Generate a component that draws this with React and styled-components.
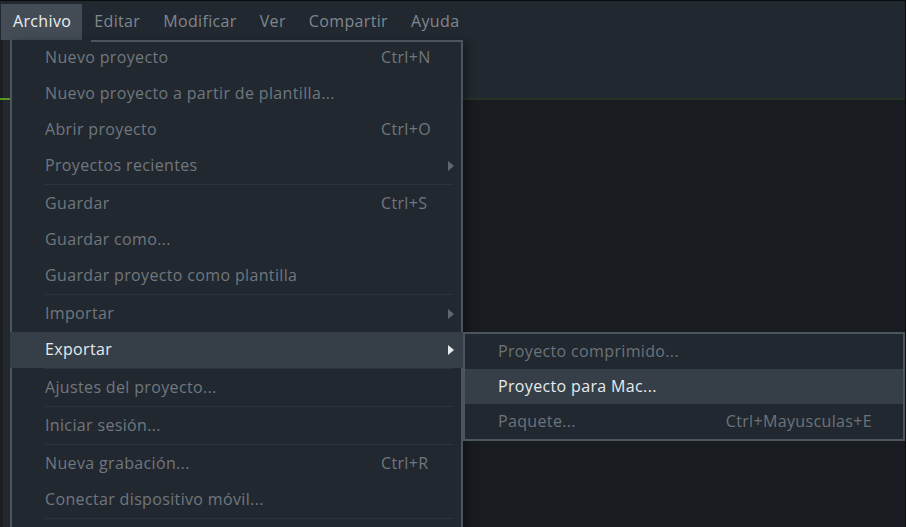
import styled, { createGlobalStyle } from "styled-components";

const GlobalStyle = createGlobalStyle`
  html, body {
    margin: 0;
    padding: 0;
    height: 100%;
    overflow: hidden;
    background: #181b1f;
  }
  #root {
    height: 100%;
  }
`;

const Window = styled.div`
  position: relative;
  height: 100vh;
  display: flex;
  flex-direction: column;
  font-family: "Open Sans", Lato, sans-serif;
  font-size: 16px;
  letter-spacing: 0.35px;
  background: #181b1f;
  border-right: 1px solid #0c0d0f;
  box-sizing: border-box;
  overflow: hidden;
`;

const MenuBar = styled.div`
  display: flex;
  align-items: flex-end;
  height: 40px;
  box-sizing: border-box;
  padding: 3px 0 0 1px;
  border-top: 1px solid #0b0c0e;
  background: #222830;
`;

const MenuTitle = styled.div`
  display: flex;
  align-items: center;
  height: 36px;
  padding: 0 11px 2px 12px;
  box-sizing: border-box;
  color: ${(p) => (p.$open ? "#e9eef0" : "#80878d")};
  background: ${(p) => (p.$open ? "#434c54" : "transparent")};
`;

const Workspace = styled.div`
  flex: 1;
  display: flex;
`;

const SideRail = styled.div`
  width: 10px;
  display: flex;
  flex-direction: column;
  background: linear-gradient(90deg, #1a1d22 0 3px, #252a30 3px);
`;

const RailTop = styled.div`
  height: 58px;
`;

const RailMarker = styled.div`
  height: 2px;
  background: #5a9b1e;
`;

const Main = styled.div`
  flex: 1;
  display: flex;
  flex-direction: column;
`;

const TopPanel = styled.div`
  height: 58px;
  background: #222830;
  border-bottom: 2px solid #263226;
`;

const Canvas = styled.div`
  flex: 1;
  background: #181b1f;
`;

const Menu = styled.div`
  position: absolute;
  left: 10px;
  top: 40px;
  width: 453px;
  box-sizing: border-box;
  padding-bottom: 24px;
  background: #222830;
  border: 2px solid #4b555d;
  border-top: none;
  box-shadow: 4px 2px 8px rgba(0, 0, 0, 0.35);
  z-index: 2;

  &::before {
    content: "";
    position: absolute;
    top: 0;
    left: 79px;
    right: -2px;
    height: 2px;
    background: #4b555d;
  }
`;

const Item = styled.div`
  position: relative;
  display: grid;
  grid-template-columns: 1fr 62px 18px;
  align-items: center;
  height: 36px;
  box-sizing: border-box;
  margin: ${(p) => (p.$active ? "0 -2px" : "0")};
  padding: ${(p) => (p.$active ? "0 2px 2px 35px" : "0 0 2px 33px")};
  color: ${(p) => (p.$active ? "#e6ebee" : "#70777e")};
  background: ${(p) => (p.$active ? "#363f48" : "transparent")};
  white-space: nowrap;
`;

const Label = styled.span``;

const Shortcut = styled.span``;

const Arrow = styled.span`
  width: 0;
  height: 0;
  margin: 2px 0 0 5px;
  border-top: 5.5px solid transparent;
  border-bottom: 5.5px solid transparent;
  border-left: 6px solid ${(p) => (p.$active ? "#e6ebee" : "#5f676e")};
`;

const Separator = styled.div`
  height: 1px;
  margin: 0 8px 1px 32px;
  background: #2d333b;
`;

const SubMenu = styled.div`
  position: absolute;
  left: 100%;
  top: 0;
  width: 442px;
  box-sizing: border-box;
  background: #222830;
  border: 2px solid #4b555d;
`;

const SubItem = styled.div`
  display: flex;
  align-items: center;
  justify-content: space-between;
  height: 35px;
  box-sizing: border-box;
  padding: 0 31px 2px 33px;
  color: ${(p) => (p.$active ? "#e6ebee" : "#6c737a")};
  background: ${(p) => (p.$active ? "#363f48" : "transparent")};
  white-space: nowrap;
`;

const titles = ["Archivo", "Editar", "Modificar", "Ver", "Compartir", "Ayuda"];

const fileMenu = [
  { label: "Nuevo proyecto", shortcut: "Ctrl+N" },
  { label: "Nuevo proyecto a partir de plantilla..." },
  { label: "Abrir proyecto", shortcut: "Ctrl+O" },
  { label: "Proyectos recientes", sub: true },
  "sep",
  { label: "Guardar", shortcut: "Ctrl+S" },
  { label: "Guardar como..." },
  { label: "Guardar proyecto como plantilla" },
  "sep",
  { label: "Importar", sub: true },
  { label: "Exportar", sub: true, active: true },
  "sep",
  { label: "Ajustes del proyecto..." },
  "sep",
  { label: "Iniciar sesión..." },
  "sep",
  { label: "Nueva grabación...", shortcut: "Ctrl+R" },
  { label: "Conectar dispositivo móvil..." },
  "sep",
];

const exportMenu = [
  { label: "Proyecto comprimido..." },
  { label: "Proyecto para Mac...", active: true },
  { label: "Paquete...", shortcut: "Ctrl+Mayusculas+E" },
];

export default function App() {
  return (
    <>
      <GlobalStyle />
      <Window>
        <MenuBar>
          {titles.map((t, i) => (
            <MenuTitle key={t} $open={i === 0}>
              {t}
            </MenuTitle>
          ))}
        </MenuBar>
        <Workspace>
          <SideRail>
            <RailTop />
            <RailMarker />
          </SideRail>
          <Main>
            <TopPanel />
            <Canvas />
          </Main>
        </Workspace>

        <Menu>
          {fileMenu.map((entry, i) =>
            entry === "sep" ? (
              <Separator key={i} />
            ) : (
              <Item key={i} $active={entry.active}>
                <Label>{entry.label}</Label>
                <Shortcut>{entry.shortcut}</Shortcut>
                {entry.sub ? <Arrow $active={entry.active} /> : <span />}
                {entry.active && (
                  <SubMenu>
                    {exportMenu.map((s) => (
                      <SubItem key={s.label} $active={s.active}>
                        <span>{s.label}</span>
                        {s.shortcut && <span>{s.shortcut}</span>}
                      </SubItem>
                    ))}
                  </SubMenu>
                )}
              </Item>
            )
          )}
        </Menu>
      </Window>
    </>
  );
}
